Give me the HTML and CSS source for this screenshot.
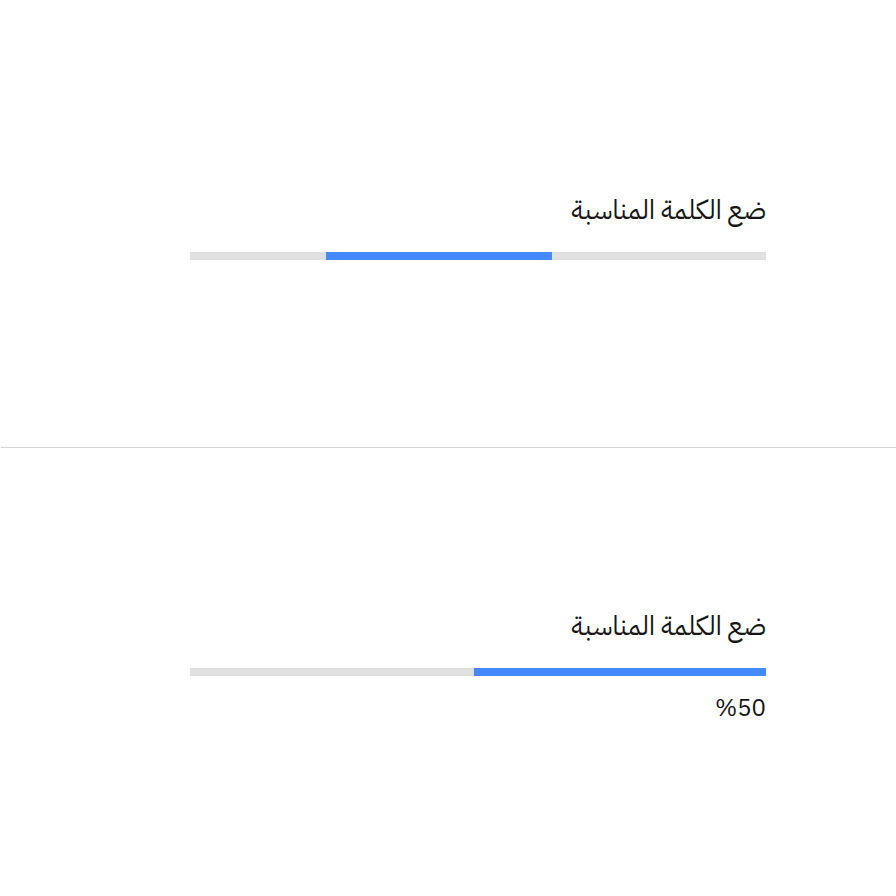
FILE: index.html
```html
<!DOCTYPE html>
<html lang="ar" dir="rtl">
<head>
<meta charset="utf-8">
<title>Progress bar</title>
<link rel="stylesheet" href="styles.css">
</head>
<body>
<section class="panel">
  <div class="progress">
    <div class="progress__label">ضع الكلمة المناسبة</div>
    <div class="progress__track">
      <div class="progress__indeterminate"></div>
    </div>
  </div>
</section>
<hr class="divider">
<section class="panel">
  <div class="progress">
    <div class="progress__label">ضع الكلمة المناسبة</div>
    <div class="progress__track">
      <div class="progress__fill" style="width:50.7%"></div>
    </div>
    <div class="progress__helper">%50</div>
  </div>
</section>
</body>
</html>
```
FILE: styles.css
```css
html, body {
  margin: 0;
  padding: 0;
  background: #ffffff;
}
body {
  font-family: "IBM Plex Sans Arabic", "Noto Sans Arabic", "DejaVu Sans", sans-serif;
  color: #161616;
}
.panel {
  height: 447px;
  display: flex;
  flex-direction: column;
  justify-content: center;
}
.divider {
  height: 1px;
  margin: 0 0 0 1px;
  border: 0;
  background: #d4d4d4;
}
.progress {
  width: 576px;
  margin-right: 130px;
}
.progress__label {
  font-size: 26.7px;
  line-height: 40px;
  padding-top: 2px;
  margin-bottom: 22px;
}
.progress__track {
  position: relative;
  height: 8px;
  background: #e0e0e0;
}
.progress__indeterminate {
  position: absolute;
  top: 0;
  bottom: 0;
  left: 136px;
  width: 226px;
  background: #4589ff;
}
.progress__fill {
  height: 100%;
  background: #4589ff;
}
.progress__helper {
  font-size: 24px;
  line-height: 40px;
  margin: 12px 0;
}
```
